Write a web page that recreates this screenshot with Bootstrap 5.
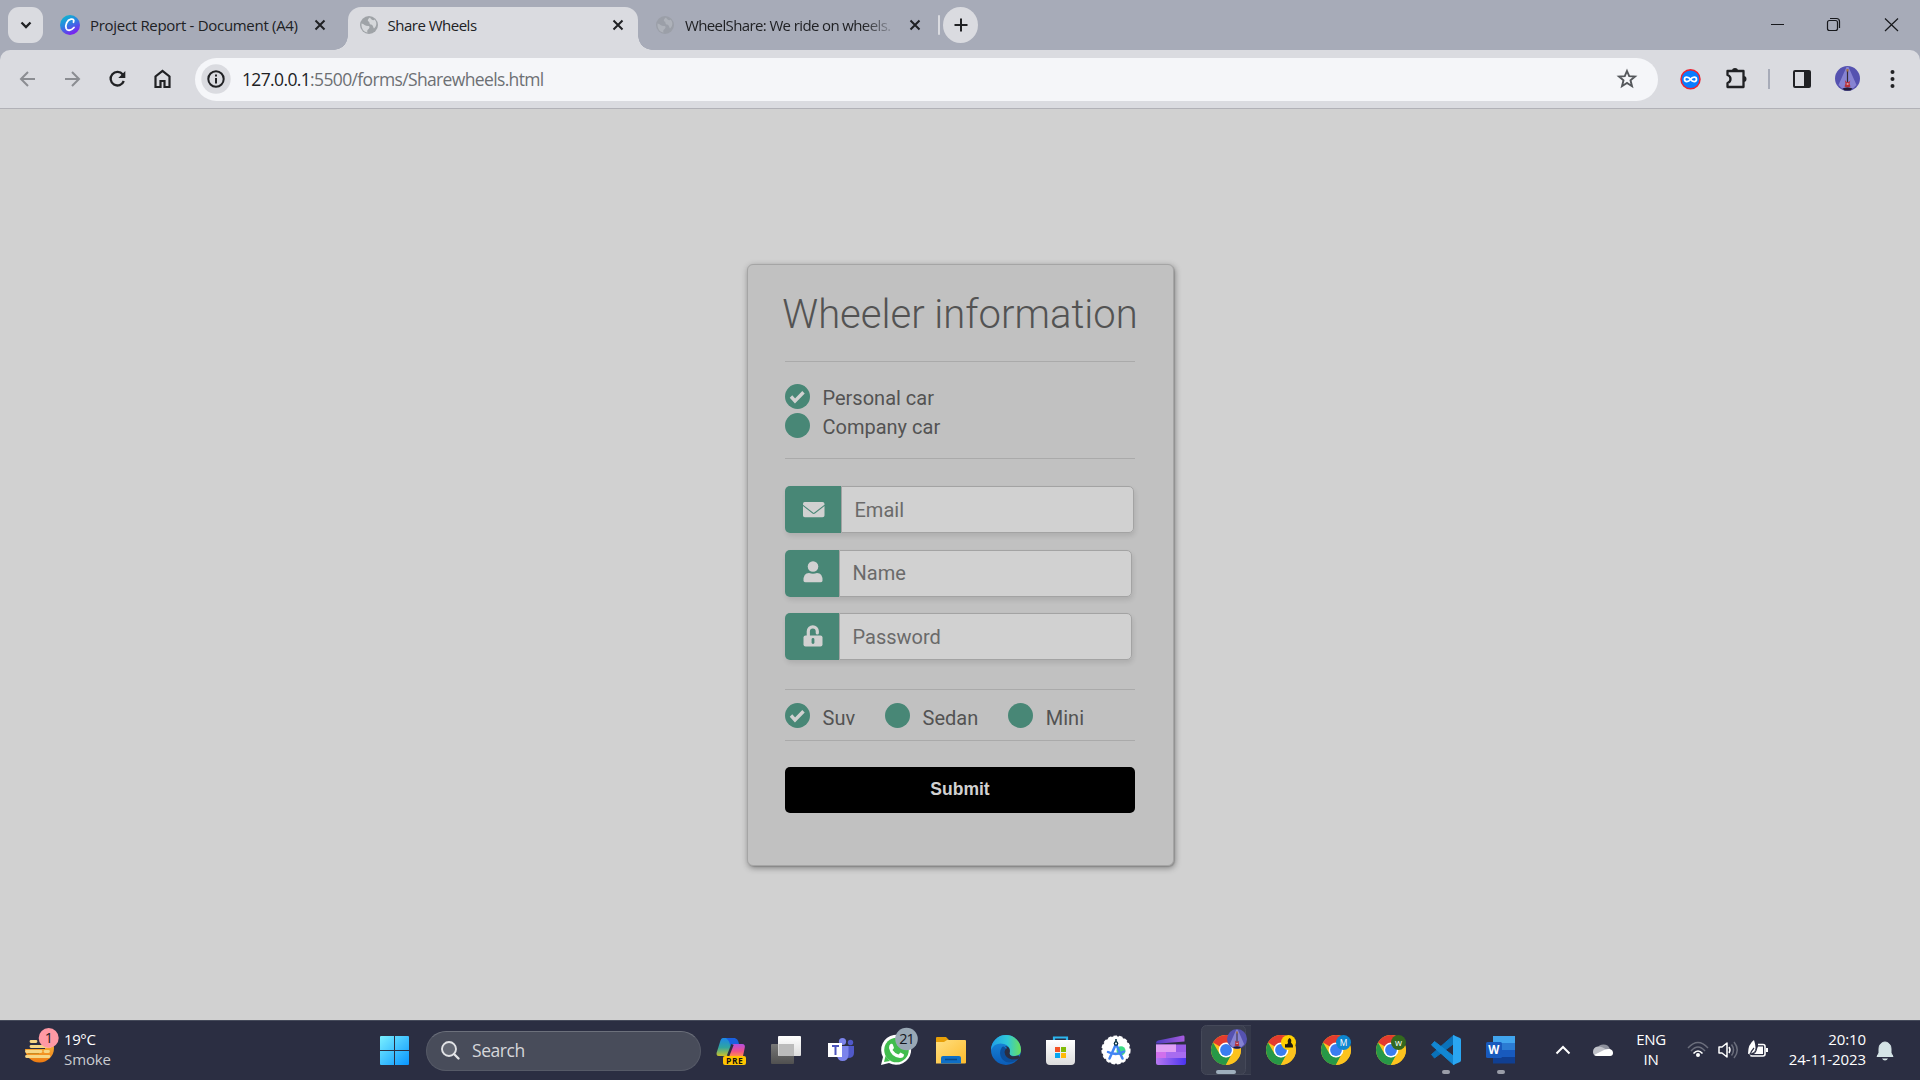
<!DOCTYPE html>
<html lang="en">
<head>
<meta charset="utf-8">
<meta name="viewport" content="width=device-width, initial-scale=1">
<title>Share Wheels</title>
<link href="https://cdn.jsdelivr.net/npm/bootstrap@5.3.0/dist/css/bootstrap.min.css" rel="stylesheet">
<style>
  body { width: 1920px; height: 1080px; overflow: hidden; font-family: "Open Sans", "Noto Sans", sans-serif; background: #d1d1d1; color: #202124; }
  svg { display: block; flex: none; }
  /* tab strip */
  .strip { height: 50px; background: #a7abb8; font-size: 15px; line-height: 20px; padding-left: 8px; }
  .tab-search { width: 35px; height: 36px; border-radius: 11px; background: #dadbe0; margin-right: 16px; }
  .tab-item { height: 36px; margin-top: 7px; }
  .tab-name { white-space: nowrap; letter-spacing: -.3px; height: 20px; }
  .tab-live { position: relative; height: 43px; background: #dadbe0; border-radius: 13px 13px 0 0; width: 290px; padding: 0 13px 7px 11px; }
  .tab-live::before, .tab-live::after { content: ""; position: absolute; bottom: 0; width: 14px; height: 14px; }
  .tab-live::before { left: -14px; background: radial-gradient(circle at 0 0, transparent 13.5px, #dadbe0 14px); }
  .tab-live::after { right: -14px; background: radial-gradient(circle at 100% 0, transparent 13.5px, #dadbe0 14px); }
  .faded { letter-spacing: -.62px; -webkit-mask-image: linear-gradient(90deg, #000 84%, transparent 100%); mask-image: linear-gradient(90deg, #000 84%, transparent 100%); }
  .tab-plus { width: 35px; height: 36px; border-radius: 50%; background: #dadbe0; }
  .tab-bar { width: 2px; height: 20px; background: #dadbe0; border-radius: 1px; }
  /* toolbar */
  .toolbar { height: 59px; background: #a7abb8; }
  .toolbar-in { height: 59px; background: #dadbe0; border-radius: 10px 10px 0 0; border-bottom: 1px solid #b1b1b7; padding-left: 5px; }
  .omni { width: 1463px; height: 43px; border-radius: 22px; background: #f5f6f9; padding-left: 6px; font-size: 17.5px; }
  .omni-url { color: #6d7074; letter-spacing: -.64px; white-space: nowrap; }
  .omni-url b { font-weight: 400; color: #202124; }
  /* form */
  .wheel-card { width: 427px; height: 602px; margin-top: 155px; margin-left: 747px; background: #c1c1c1; border: 1px solid #a5a5a5; border-radius: 6px; padding: 20px 38px 0 37px; box-shadow: 1px 2px 6px rgba(0,0,0,.38), 1px 1px 1px rgba(0,0,0,.12); font-family: Roboto, sans-serif; font-size: 20px; color: #535353; }
  .wheel-card h1 { font-size: 40px; font-weight: 300; line-height: 60px; white-space: nowrap; margin: 0 -10px 16px; text-align: center; }
  .rule { height: 1px; background: #aaa; width: 350px; }
  .pick { height: 29px; line-height: 24px; }
  .pick span { margin-top: 3px; margin-left: 12.5px; }
  .pick.low span { margin-top: 5px; }
  .fieldline { height: 47px; width: max-content; border-radius: 5px; box-shadow: 1px 3px 5px rgba(0,0,0,.1); }
  .fieldicon { width: 54px; padding-left: 1px; background: #488776; border-radius: 5px 0 0 5px; }
  .fieldicon.wide { width: 56px; padding-left: 2px; }
  .fieldbox, .fieldbox:focus { width: 293px; border: 1px solid #a3a3a3; border-radius: 0 5px 5px 0; background: #d1d1d1; font-size: 20px; padding: 0 13px 0 12.500px; line-height: 24px; outline: 0; }
  .fieldbox.high { padding-bottom: 2px; }
  .fieldbox::placeholder { color: #6a6a6a; opacity: 1; }
  .go { width: 350px; height: 46px; background: #000; color: #d1d1d1; border: 0; border-radius: 5px; font: bold 17.5px "Liberation Sans", Arial, sans-serif; padding: 0 0 2px; }
  /* taskbar */
  .taskbar { height: 60px; background: #2b2e42; border-top: 1px solid #454a5a; color: #fff; font-size: 15px; line-height: 20px; }
  .taskbar > svg { margin-top: -1px; }
  .find { width: 275px; height: 40px; border-radius: 20px; background: #484c5a; border: 1px solid #565a67; border-top-color: #6c707b; font-size: 17.5px; color: #d6d7da; padding-left: 14px; letter-spacing: -.45px; }
  .two { white-space: nowrap; padding-bottom: 4px; }
</style>
<script src="https://cdn.jsdelivr.net/npm/bootstrap@5.3.0/dist/js/bootstrap.bundle.min.js"></script>
</head>
<body class="d-flex flex-column m-0">

<!-- shared symbols -->
<svg width="0" height="0" class="position-absolute">
  <defs>
    <symbol id="x" viewBox="-10 -10 20 20"><path d="M-4.5-4.5 4.5 4.5M4.5-4.5-4.5 4.5" stroke="#202124" stroke-width="2" fill="none"/></symbol>
    <symbol id="globe" viewBox="-10 -10 20 20"><circle r="9" fill="currentColor"/><path d="M-7.5-1.5C-5-1-4 1-1 1c2 0 2 2 0 3.5C-2 5.500-2 7-1.200 7.500-5 7.500-8 3.500-7.500-1.500ZM1-7.500C-1-6-2-4.500-.5-3.500 1-3 0-1 1.500-.5 4-.5 4 2 5 3.500 8 1 8-3 5.500-5.500 4.500-4 2.500-5 1-7.500Z" fill="var(--land)"/></symbol>
    <symbol id="tick" viewBox="0 0 25 25"><circle cx="12.500" cy="12.500" r="12.500" fill="#488776"/><path d="M6 12.500l4 4.400L18.500 8.200" stroke="#d1d1d1" stroke-width="3.400" fill="none"/></symbol>
    <symbol id="dot" viewBox="0 0 25 25"><circle cx="12.500" cy="12.500" r="12.500" fill="#488776"/></symbol>
    <g id="chrome">
      <circle r="15" fill="#fcc31e"/>
      <path d="M0 0 13-7.500A15 15 0 0 0-13-7.500Z" fill="#e33b2e"/>
      <path d="M-13-7.500-6.500 3.700 0 7.500 6 3.500-.2 15A15 15 0 0 1-13-7.500Z" fill="#279847"/>
      <path d="M0-7.300H13A15 15 0 0 1 0 15L6.300 3.600Z" fill="#fcc31e"/>
      <circle r="7.400" fill="#fff"/><circle r="5.900" fill="#3a7df0"/>
    </g>
    <g id="guitar">
      <path d="M-1-11.500-9 6.500-5.500 10H5.500L9 6.500 1-11.500Z" fill="#8f8cd8" opacity=".85"/>
      <path d="M0-8V4" stroke="#352a35" stroke-width="1.200"/><path d="M0-9.500V-7" stroke="#a8713c" stroke-width="2"/>
      <path d="M-2.600 1.500-1 3.500H1.200L2.800 2 2 5 3 8q-3 2-6 0L-2 5Z" fill="#b8323a"/><path d="M-.8 5.500H1" stroke="#e8dce0" stroke-width="1.200"/>
      <path d="M-5 10Q0 8 5 10L3 12H-3Z" fill="#201c38"/>
    </g>
    <linearGradient id="gw" x1="0" y1="0" x2="1" y2="1"><stop offset="0" stop-color="#7af0ff"/><stop offset="1" stop-color="#0895ff"/></linearGradient>
    <linearGradient id="gc" x1="0" y1="0" x2=".5" y2="1"><stop offset="0" stop-color="#05c3cc"/><stop offset=".5" stop-color="#2a86e0"/><stop offset="1" stop-color="#7a22f0"/></linearGradient>
    <linearGradient id="gs" x1="0" y1="0" x2="0" y2="1"><stop offset="0" stop-color="#fcd050"/><stop offset="1" stop-color="#ee7a10"/></linearGradient>
    <linearGradient id="gp1" x1="0" y1="0" x2="0" y2="1"><stop offset="0" stop-color="#1c86e8"/><stop offset=".5" stop-color="#2fa5a0"/><stop offset="1" stop-color="#d8c520"/></linearGradient>
    <linearGradient id="gp2" x1="0" y1="0" x2="0" y2="1"><stop offset="0" stop-color="#b34fe0"/><stop offset=".6" stop-color="#f0508a"/><stop offset="1" stop-color="#ff8a50"/></linearGradient>
    <linearGradient id="gf" x1="0" y1="0" x2="1" y2="1"><stop offset="0" stop-color="#ffdf80"/><stop offset="1" stop-color="#fdbb2c"/></linearGradient>
    <linearGradient id="ge" x1="0" y1="0" x2="1" y2="0"><stop offset="0" stop-color="#1f9fe8"/><stop offset=".55" stop-color="#30c8d8"/><stop offset="1" stop-color="#6be05a"/></linearGradient>
    <linearGradient id="ge2" x1="0" y1="0" x2="0" y2="1"><stop offset="0" stop-color="#1a8fe0"/><stop offset="1" stop-color="#0b5cb8"/></linearGradient>
    <linearGradient id="gb" x1="0" y1="0" x2="0" y2="1"><stop offset="0" stop-color="#fff"/><stop offset="1" stop-color="#dcdcdc"/></linearGradient>
    <linearGradient id="gk" x1="0" y1="0" x2="1" y2="0"><stop offset="0" stop-color="#4c3cc0"/><stop offset="1" stop-color="#a85ce0"/></linearGradient>
    <linearGradient id="gk2" x1="0" y1="0" x2="1" y2="0"><stop offset="0" stop-color="#b878f0"/><stop offset="1" stop-color="#4a34f0"/></linearGradient>
    <linearGradient id="gt" x1="0" y1="0" x2="0" y2="1"><stop offset="0" stop-color="#777"/><stop offset="1" stop-color="#505050"/></linearGradient>
  </defs>
</svg>

<header>
  <div class="strip d-flex align-items-start">
    <div class="tab-search tab-item d-flex align-items-center justify-content-center">
      <svg width="14" height="12" viewBox="-7 -6 14 12"><path d="M-4.500-2.500 0 2 4.500-2.500" stroke="#202124" stroke-width="2.300" fill="none"/></svg>
    </div>
    <div class="tab-item d-flex align-items-center" style="width:289px">
      <svg width="22" height="22" viewBox="-11 -11 22 22"><circle r="10" fill="url(#gc)"/><path d="M3.500-2.800C4.500-5 3-6.200 1-5.800-3-5-5 0-3.800 3.500-2.800 6 1 6 4 2.500" stroke="#fff" stroke-width="1.800" fill="none" stroke-linecap="round"/></svg>
      <span class="tab-name" style="margin-left:9px;width:220px">Project Report - Document (A4)</span>
      <svg width="20" height="20"><use href="#x"/></svg>
    </div>
    <div class="tab-live tab-item d-flex align-items-center">
      <svg width="20" height="20" style="color:#9fa3a7;--land:#d6d8db"><use href="#globe"/></svg>
      <span class="tab-name flex-grow-1" style="margin-left:8.500px;letter-spacing:-.5px">Share Wheels</span>
      <svg width="20" height="20" style="margin-right:-3px"><use href="#x"/></svg>
    </div>
    <div class="tab-item d-flex align-items-center" style="padding-left:17px">
      <svg width="20" height="20" style="color:#9b9fa8;--land:#aeb2ba"><use href="#globe"/></svg>
      <span class="tab-name faded" style="margin-left:10px;width:212px">WheelShare: We ride on wheels.</span>
      <svg width="20" height="20" style="margin-left:8px"><use href="#x"/></svg>
      <div class="tab-bar" style="margin-left:13px"></div>
      <div class="tab-plus d-flex align-items-center justify-content-center" style="margin-left:3px">
        <svg width="14" height="14" viewBox="-7 -7 14 14"><path d="M-6.500 0H6.500M0-6.500V6.500" stroke="#202124" stroke-width="2"/></svg>
      </div>
    </div>
    <svg class="ms-auto" width="170" height="50" viewBox="1750 0 170 50" fill="none" stroke="#17181c" stroke-width="1.200"><path d="M1771 24.500h13M1885 18.500l13 12.500M1898 18.500l-13 12.500"/><rect x="1827.500" y="20.500" width="10" height="10" rx="2"/><path d="M1830 18.500h6.500q3 0 3 3v6.500"/></svg>
  </div>

  <div class="toolbar">
    <div class="toolbar-in d-flex align-items-center">
      <svg width="190" height="58" viewBox="5 50 190 58" fill="none" stroke-width="2">
        <path d="M35 79H21M28 72l-7 7 7 7M65 79h14M72 72l7 7-7 7" stroke="#8b8d92"/>
        <path d="M122.800 74.500a6.800 6.800 0 1 0 1 6.500" stroke="#202124" stroke-width="2.300"/><path d="M125.300 71v7h-7Z" fill="#202124"/>
        <path d="M155.500 87V76.500L162.500 71l7 5.500V87h-5v-6h-4v6Z" stroke="#202124" stroke-width="2.200"/>
      </svg>
      <div class="omni d-flex align-items-center">
        <svg width="30" height="30" viewBox="-15 -15 30 30"><circle r="14.700" fill="#dadbe0"/><circle r="7.700" fill="none" stroke="#202124" stroke-width="2"/><path d="M0-1V4.500M0-4.500V-2.500" stroke="#202124" stroke-width="2"/></svg>
        <span class="omni-url" style="margin-left:11px"><b>127.0.0.1</b>:5500/forms/Sharewheels.html</span>
        <svg class="ms-auto" width="22" height="22" viewBox="-11 -11 22 22" style="margin-right:20px"><path d="M0-8 2.200-2.800 8-2.400 3.500 1.300 5 7.200 0 4-5 7.200-3.500 1.300-8-2.400-2.200-2.800Z" fill="none" stroke="#55585c" stroke-width="1.900"/></svg>
      </div>
      <svg width="262" height="58" viewBox="1658 50 262 58">
        <circle cx="1690.500" cy="79.300" r="9.500" fill="#0a7cff" stroke="#ee2230" stroke-width="1.500"/>
        <path d="M1690.500 79.300c-2-3-6-3-6 0s4 3 6 0 6-3 6 0-4 3-6 0Z" fill="none" stroke="#fff" stroke-width="1.800"/>
        <path d="M1727.500 71H1743.500V87H1727.500V83q3-1 3-4t-3-4Z" fill="none" stroke="#202124" stroke-width="2.300" stroke-linejoin="round"/>
        <path d="M1732 71a3 3 0 0 1 6 0ZM1743.500 76a3 3 0 0 1 0 6Z" fill="#202124"/>
        <rect x="1768" y="69" width="2" height="20" fill="#a7abb8"/>
        <rect x="1794" y="71" width="16" height="16" rx="1" fill="none" stroke="#202124" stroke-width="2"/><rect x="1804" y="71" width="6" height="16" fill="#202124"/>
        <circle cx="1847.500" cy="78.500" r="12.500" fill="#5552b0"/><use href="#guitar" x="1847.500" y="78.500"/>
        <g fill="#202124"><circle cx="1892.500" cy="72" r="2"/><circle cx="1892.500" cy="79" r="2"/><circle cx="1892.500" cy="86" r="2"/></g>
      </svg>
    </div>
  </div>
</header>

<main class="flex-grow-1 overflow-hidden">
  <form class="wheel-card">
    <h1>Wheeler information</h1>
    <div class="rule"></div>
    <div style="padding:20px 0 18px">
      <label class="pick d-flex align-items-center"><svg width="25" height="25"><use href="#tick"/></svg><span>Personal car</span></label>
      <label class="pick d-flex align-items-center"><svg width="25" height="25"><use href="#dot"/></svg><span>Company car</span></label>
    </div>
    <div class="rule"></div>
    <div class="fieldline d-flex" style="margin-top:27px">
      <div class="fieldicon wide d-flex align-items-center justify-content-center"><svg width="22" height="16" viewBox="0 0 22 16"><path d="M1.500 0h18Q21.500 0 21.500 2v.8L10.700 11 0 2.800V2Q0 0 1.500 0ZM0 4 9.500 11.600q1.200.8 2.500 0l9.500-7.600V13.500q0 1.800-2 1.800H1.800Q0 15.300 0 13.500Z" fill="#d1d1d1"/></svg></div>
      <input class="fieldbox" type="text" placeholder="Email">
    </div>
    <div class="fieldline d-flex" style="margin-top:17px">
      <div class="fieldicon d-flex align-items-center justify-content-center"><svg width="20" height="22" viewBox="0 0 20 22" style="margin-top:-3px"><circle cx="10" cy="5.500" r="5.300" fill="#d1d1d1"/><path d="M.5 20Q.2 12 6 12q4 1.600 8 0 5.800 0 5.500 8Q19 21.300 17.500 21.300H2.500Q1 21.300.5 20Z" fill="#d1d1d1"/></svg></div>
      <input class="fieldbox high" type="text" placeholder="Name">
    </div>
    <div class="fieldline d-flex" style="margin-top:16px">
      <div class="fieldicon d-flex align-items-center justify-content-center"><svg width="20" height="22" viewBox="0 0 20 22" style="margin-top:-1px"><path d="M5.300 11V6.300a4.500 4.500 0 0 1 9 0V8" fill="none" stroke="#d1d1d1" stroke-width="3.200" stroke-linecap="round"/><path d="M2.500 10.500h15q2 0 2 2V19.500q0 2-2 2h-15q-2 0-2-2V12.500q0-2 2-2Z" fill="#d1d1d1"/><path d="M10 14.500v3" stroke="#488776" stroke-width="2.800" stroke-linecap="round"/></svg></div>
      <input class="fieldbox" type="text" placeholder="Password">
    </div>
    <div class="rule" style="margin-top:29px"></div>
    <div class="d-flex" style="padding:11px 0 10px;gap:30px">
      <label class="pick low d-flex align-items-center"><svg width="25" height="25"><use href="#tick"/></svg><span>Suv</span></label>
      <label class="pick low d-flex align-items-center"><svg width="25" height="25"><use href="#dot"/></svg><span>Sedan</span></label>
      <label class="pick low d-flex align-items-center"><svg width="25" height="25"><use href="#dot"/></svg><span>Mini</span></label>
    </div>
    <div class="rule"></div>
    <button class="go d-block" type="button" style="margin-top:26px">Submit</button>
  </form>
</main>

<footer class="taskbar d-flex align-items-center">
  <svg width="64" height="60" viewBox="0 0 64 60">
    <circle cx="39.500" cy="28" r="14.500" fill="url(#gs)"/>
    <path d="M22 13H45V29H22Z" fill="#2b2e42"/><path d="M28 31q5 4 11 0v3H28Z" fill="#c98a20"/>
    <path d="M31 21.500h5M31 26.500H50M26.500 31.500H41M45 31.500h3.500M26.500 36.500H49" stroke="#f6d684" stroke-width="2.800" stroke-linecap="round"/>
    <circle cx="48.700" cy="18" r="10" fill="#ff99a4"/>
    <text x="49" y="23.300" font-size="14.500" fill="#1c1c24" text-anchor="middle">1</text>
  </svg>
  <div class="two" style="width:316px;letter-spacing:-.4px">19°C<br><span style="color:#c9cbd0;letter-spacing:-.1px">Smoke</span></div>
  <svg width="46" height="60" viewBox="380 0 46 60"><path d="M381 16h13v14h-14V17q0-1 1-1ZM395 16h13q1 0 1 1V30H395ZM380 31h14V45H381q-1 0-1-1ZM395 31h14V44q0 1-1 1H395Z" fill="url(#gw)"/></svg>
  <div class="find d-flex align-items-center">
    <svg width="20" height="20" viewBox="0 0 20 20"><circle cx="8" cy="8" r="7" fill="#646874" stroke="#e2e3e6" stroke-width="1.900"/><path d="M13 13l4.500 4.500" stroke="#e2e3e6" stroke-width="2.400" stroke-linecap="round"/></svg>
    <span style="margin-left:11px;padding-bottom:2px">Search</span>
  </div>

  <!-- pinned applications, each drawn around its own centre -->
  <svg width="55" height="60" viewBox="-30 -30 55 60"><path d="M-8-12H3Q5-12 4-9L-1 5Q-2 8-5 6H-12Q-16 6-13.500 0L-11-8Q-10-12-8-12Z" fill="url(#gp1)"/><path d="M-5-12H3Q7-12 8-6H3Q0-6-1-4Q-1-9-5-12Z" fill="#1a5fe0"/><path d="M3-6h8q4 0 2.500 5L12 6H-3L0-1Q1-6 3-6Z" fill="url(#gp2)"/><path d="M1.500-5.500-3 6" stroke="#2b2e42" stroke-width="2.500"/><rect x="-8" y="6" width="23" height="9" rx="2" fill="#ffc400"/><text x="3.700" y="13.500" font-size="8.500" font-weight="700" text-anchor="middle" letter-spacing=".5" fill="#111">PRE</text></svg>
  <svg width="55" height="60" viewBox="-30 -30 55 60"><rect x="-15" y="-6" width="23" height="20" rx="1" fill="url(#gt)"/><rect x="-8" y="-14" width="23" height="20" rx="1" fill="url(#gb)"/><rect x="-7.500" y="-6" width="15.500" height="12" fill="#bbb"/></svg>
  <svg width="55" height="60" viewBox="-30 -30 55 60"><circle cx="1.500" cy="-8.500" r="3.600" fill="#7b83eb"/><circle cx="9.500" cy="-7.500" r="2.700" fill="#5059c9"/><path d="M6-4h7V3Q13 8 7 8Z" fill="#5059c9"/><path d="M-4-4H7.500V5Q7 11 1.500 11-3 11-4 6Z" fill="#7b83eb"/><rect x="-13" y="-7" width="14" height="14" fill="#fff"/><path d="M-9-4H-2M-5.500-4V5" stroke="#4b53bc" stroke-width="2"/></svg>
  <svg width="55" height="60" viewBox="-30 -30 55 60"><path d="M-15 15-13 7A15 15 0 1 1-7 13Z" fill="#fff"/><circle cx=".5" cy="0" r="12.300" fill="#42bd4e"/><path d="M-12 12-10.500 6-6 11Z" fill="#42bd4e"/><path d="M-5.500-6Q-3.500-7-3-5l1 3-1.500 2Q-1 3.500 2.500 4.500L4.500 2.500 8 4.500Q8 8 4 8-5 7-7-2-7-5-5.500-6Z" fill="#fff"/><circle cx="10.500" cy="-11" r="11.300" fill="#99a8b5"/><text x="10.500" y="-5.800" font-size="14.500" letter-spacing="-1" text-anchor="middle" fill="#16181f">21</text></svg>
  <svg width="55" height="60" viewBox="-30 -30 55 60"><path d="M-14-13h9l3 3H4V0H-15V-12Q-15-13-14-13Z" fill="#e8a008"/><path d="M-15-8h8l3-2H14q1 0 1 1V12.500q0 1-1 1H-15Z" fill="url(#gf)"/><path d="M-10 13.500V8q0-2 2-2H8q2 0 2 2v5.500Z" fill="#0f6fc6"/><path d="M-6 9.500H6" stroke="#0a4a8a" stroke-width="1.500"/></svg>
  <svg width="55" height="60" viewBox="-30 -30 55 60"><circle r="15" fill="url(#ge2)"/><path d="M-15 0A15 15 0 0 1 15 0Q15 6 8 6 3 5.500 3.500 3 5-4-2-6-11-8-15 0Z" fill="url(#ge)"/><path d="M-4-3Q-8 3-4 9 3 16 12 9 5 11 1 6 0 3 1 0-2-5-4-3Z" fill="#0c4f9c"/><path d="M-1-4Q5-3 3.700 2.500 3 5 6 6.200 9 6.500 12 5.500 14 5 13 8 11 10 6 9.500-1 8-1.500 2-1-1 1-2Z" fill="#2b2e42"/></svg>
  <svg width="55" height="60" viewBox="-30 -30 55 60"><path d="M-7-9v-3.500h13V-9" stroke="#2cb5ee" stroke-width="2.200" fill="none"/><path d="M-15-10H14V11q0 4-4 4H-11q-4 0-4-4Z" fill="url(#gb)"/><path d="M-6-3h5v5h-5Z" fill="#f35325"/><path d="M0-3h5v5H0Z" fill="#81bc06"/><path d="M-6 3h5v5h-5Z" fill="#05a6f0"/><path d="M0 3h5v5H0Z" fill="#ffba08"/></svg>
  <svg width="55" height="60" viewBox="-30 -30 55 60"><circle r="13.700" fill="#fff" stroke="#fff" stroke-width="1.800" stroke-dasharray="3.600 2"/><circle cx="5" cy=".8" r="4.500" fill="#3ddc84"/><path d="M0-6-6.500 8.500M0-6 6.500 8.500M-8 2Q0 6 8 1.500" stroke="#4285f4" stroke-width="2.500" fill="none" stroke-linecap="round"/><circle cy="-6.500" r="2.300" fill="#073042"/><circle cy="-6.500" r="1" fill="#fff"/><path d="M0-11v3" stroke="#073042" stroke-width="1.600"/></svg>
  <svg width="55" height="60" viewBox="-30 -30 55 60"><path d="M-15-7Q-15-9-13-9.500L12-14.500Q13.500-15 13.500-13V-8.500L-11-6.500H-15Z" fill="url(#gk)"/><path d="M-15-5.500H15V2H-15Z" fill="#9a5ce8"/><path d="M-15-5.500H5V2H-15Z" fill="#e0a0f4"/><path d="M-15 2H-5V8H-15Z" fill="#d070ec"/><path d="M-5 2H15V8H-5Z" fill="#a86cf0"/><path d="M-15 8H15v5q0 2-2 2H-13q-2 0-2-2Z" fill="url(#gk2)"/></svg>
  <svg width="55" height="60" viewBox="-30 -30 55 60"><rect x="-20" y="-24.500" width="50" height="49" rx="5" fill="#343849" stroke="#3f4354"/><rect x="-24.500" y="-24.500" width="44" height="49" rx="5" fill="#3a3e4e" stroke="#454959"/><use href="#chrome"/><circle cx="11" cy="-11" r="10" fill="#5552b0"/><use href="#guitar" transform="translate(11 -11) scale(.8)"/><rect x="-10" y="20" width="20" height="4" rx="2" fill="#9fafbd"/></svg>
  <svg width="55" height="60" viewBox="-30 -30 55 60"><use href="#chrome"/><circle cx="7.500" cy="-7.500" r="7.500" fill="#ffd000"/><path d="M4-2.500V-6q2 1 3-1-1-3 1.500-5 2.500 1 1.500 4.500Q12-6 12-2.500Z" fill="#201c10"/></svg>
  <svg width="55" height="60" viewBox="-30 -30 55 60"><use href="#chrome"/><circle cx="7.500" cy="-7.500" r="7.500" fill="#0d86d0"/><text x="7.500" y="-4.500" font-size="8.500" text-anchor="middle" fill="#fff">M</text></svg>
  <svg width="55" height="60" viewBox="-30 -30 55 60"><use href="#chrome"/><circle cx="7.500" cy="-7.500" r="7.500" fill="#33691e"/><text x="7.500" y="-4.500" font-size="9" text-anchor="middle" fill="#fff">w</text></svg>
  <svg width="55" height="60" viewBox="-30 -30 55 60"><path d="M-14.500 4.500-11.500 8 8-6.500V-15Z" fill="#0a72ba" stroke="#0a72ba" stroke-linejoin="round"/><path d="M-14.500-5-11.500-8.500 8 6.500V15Z" fill="#1287d2" stroke="#1287d2" stroke-linejoin="round"/><path d="M7-15 14-12q1 .5 1 2V10q0 1.500-1 2L7 15Z" fill="#2aa6f2"/><rect x="-4" y="20" width="8" height="4" rx="2" fill="#9a9da8"/></svg>
  <svg width="55" height="60" viewBox="-30 -30 55 60"><path d="M-8-14H14v7H-8Z" fill="#41a5ee"/><path d="M-8-7H14V0H-8Z" fill="#2b7cd3"/><path d="M-8 0H14V7H-8Z" fill="#185abd"/><path d="M-8 7H14v6.500H-8Z" fill="#103f91"/><rect x="-15" y="-8" width="16" height="16" rx="1.500" fill="#185abd"/><text x="-7.300" y="4.300" font-size="11.500" font-weight="700" text-anchor="middle" fill="#fff">W</text><rect x="-4" y="20" width="8" height="4" rx="2" fill="#9a9da8"/></svg>

  <svg width="104" height="60" viewBox="1526 0 104 60"><path d="M1556.500 33.500 1563 27l6.500 6.500" stroke="#fff" stroke-width="2" fill="none"/><path d="M1597 29a7 7 0 0 1 13 0L1604 33Z" fill="#8d909c"/><path d="M1593 32q0-5 5-5.500 5 0 9 4l4 5H1596q-3-.5-3-3.500Z" fill="#bfc1c8"/><path d="M1594 35 1604 30Q1607 28.500 1610 29q3 1 3 4t-3 3H1597q-2 0-3-1Z" fill="#fff"/></svg>
  <div class="two text-center" style="width:42px;letter-spacing:-.3px">ENG<br>IN</div>
  <svg width="108" height="60" viewBox="1672 0 108 60" fill="none">
    <path d="M1688 28q10-11 20 0M1691 31q7-8 14 0" stroke="#6b6e7c" stroke-width="1.500"/><path d="M1693.500 33.500q4.500-5 9 0" stroke="#fff" stroke-width="1.600"/><circle cx="1698" cy="35" r="2" fill="#fff"/>
    <path d="M1719 27h3l5-4V37l-5-4h-3Z" stroke="#fff" stroke-width="1.500" stroke-linejoin="round"/><path d="M1729 27q2 3 0 6" stroke="#fff" stroke-width="1.500"/><path d="M1731.500 24.500q4 5.500 0 11M1734 22q6.500 8 0 16" stroke="#6b6e7c" stroke-width="1.500"/>
    <path d="M1758 24.500h5q2 0 2 2V34q0 2-2 2H1752q-2 0-2-2" stroke="#fff" stroke-width="1.600"/><path d="M1766 28h2v4h-2ZM1758 26.500H1763V34H1753Z" fill="#fff"/><path d="M1748 34q0-10 6-14 3 9 0 12-3 2-6 2Z" fill="#fff"/><path d="M1749 37q2-6 5-9M1757 25q0 7-4 9" stroke="#2b2e42" stroke-width="1.200"/>
  </svg>
  <div class="two text-end" style="width:86px;letter-spacing:-.1px">20:10<br>24-11-2023</div>
  <svg width="54" height="60" viewBox="1866 0 54 60"><path d="M1877 36.500 1879 33V28.500a6 6.500 0 0 1 12 0V33l2 3.500Z" fill="#d5e4e6" stroke="#d5e4e6" stroke-linejoin="round"/><path d="M1882 38.500h6q-1 2-3 2t-3-2Z" fill="#d5e4e6"/></svg>
</footer>
</body>
</html>
